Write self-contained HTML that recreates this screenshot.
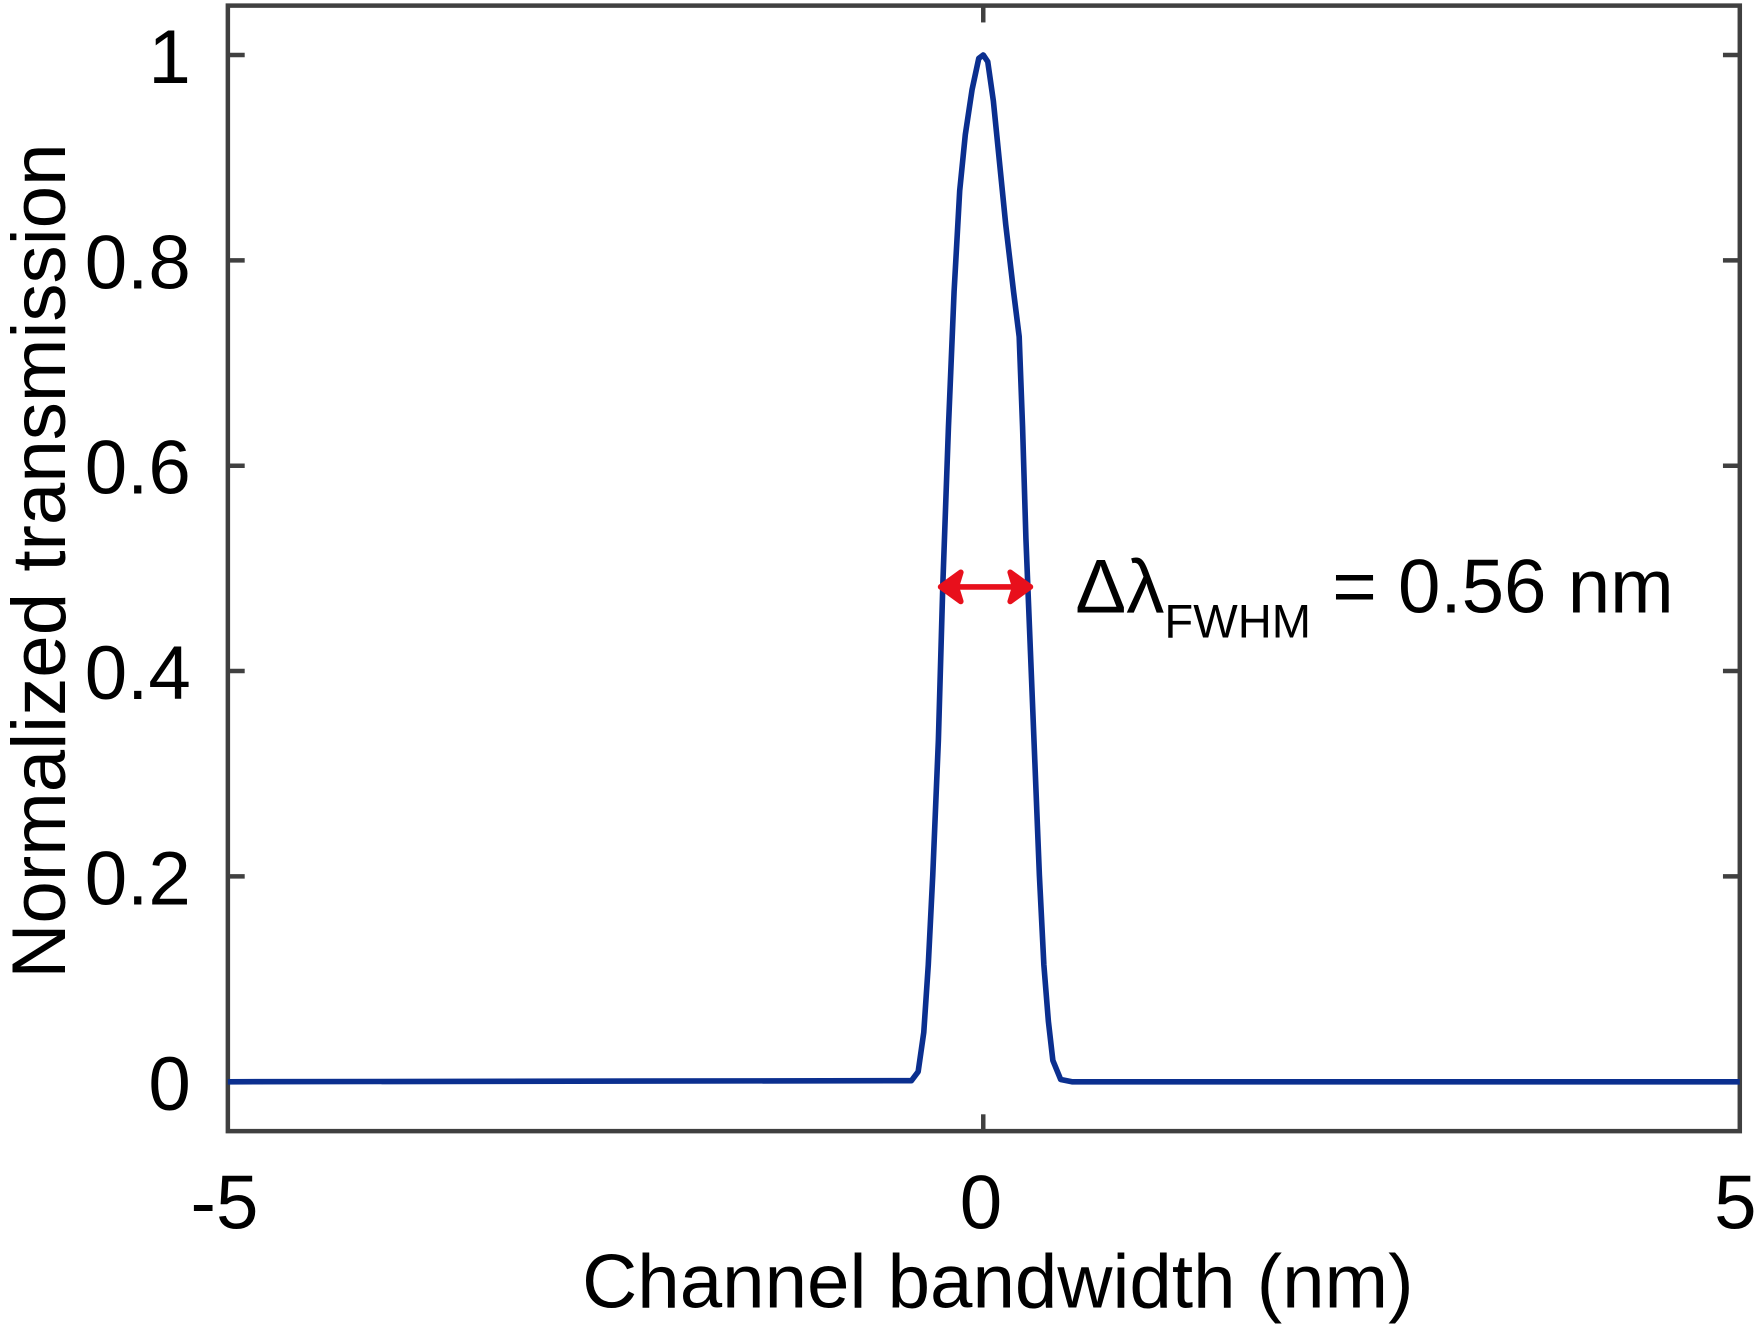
<!DOCTYPE html>
<html><head><style>html,body{margin:0;padding:0;background:#fff;}svg{display:block}</style></head>
<body>
<svg width="1760" height="1332" viewBox="0 0 1568 1187" preserveAspectRatio="none" xmlns="http://www.w3.org/2000/svg" font-family="Liberation Sans, Arial, sans-serif">
<rect x="203" y="5" width="1347" height="1003" fill="none" stroke="#404040" stroke-width="4"/>
<g stroke="#404040" stroke-width="4">
<line x1="203" y1="49" x2="218" y2="49"/><line x1="1535" y1="49" x2="1550" y2="49"/>
<line x1="203" y1="232" x2="218" y2="232"/><line x1="1535" y1="232" x2="1550" y2="232"/>
<line x1="203" y1="415" x2="218" y2="415"/><line x1="1535" y1="415" x2="1550" y2="415"/>
<line x1="203" y1="598" x2="218" y2="598"/><line x1="1535" y1="598" x2="1550" y2="598"/>
<line x1="203" y1="781" x2="218" y2="781"/><line x1="1535" y1="781" x2="1550" y2="781"/>
<line x1="203" y1="964" x2="218" y2="964"/><line x1="1535" y1="964" x2="1550" y2="964"/>
<line x1="876" y1="5" x2="876" y2="20"/><line x1="876" y1="993" x2="876" y2="1008"/>
</g>
<path d="M203,964 L812,963 L818,955 L823,920 L827,860 L831,780 L836,660 L840,520 L845,380 L850,260 L855,170 L860,120 L866,80 L872,52 L876,49 L880,55 L885,90 L890,140 L896,200 L903,260 L908,300 L911,380 L914,480 L918,580 L922,680 L926,780 L930,860 L934,910 L938,945 L945,962 L955,964 L1550,964" fill="none" stroke="#0b2f8f" stroke-width="5" stroke-linejoin="round"/>
<g stroke="#e8101c" stroke-width="5" fill="#e8101c" stroke-linejoin="round">
<line x1="845" y1="523" x2="911" y2="523"/>
<polygon points="838,523 856,510 852,523 856,536"/>
<polygon points="918,523 900,510 904,523 900,536"/>
</g>
<g font-size="68" fill="#000" text-anchor="end">
<text x="170" y="74">1</text>
<text x="170" y="257">0.8</text>
<text x="170" y="440">0.6</text>
<text x="170" y="623">0.4</text>
<text x="170" y="806">0.2</text>
<text x="170" y="989">0</text>
</g>
<g font-size="68" fill="#000" text-anchor="middle">
<text x="200" y="1095">-5</text>
<text x="874" y="1095">0</text>
<text x="1546" y="1095">5</text>
<text x="889" y="1165">Channel bandwidth (nm)</text>
<text transform="translate(58,500) rotate(-90)">Normalized transmission</text>
</g>
<text x="958" y="546" font-size="68" fill="#000">Δλ<tspan font-size="42" dy="22">FWHM</tspan><tspan dy="-22" font-size="68"> = 0.56 nm</tspan></text>
</svg>
</body></html>
